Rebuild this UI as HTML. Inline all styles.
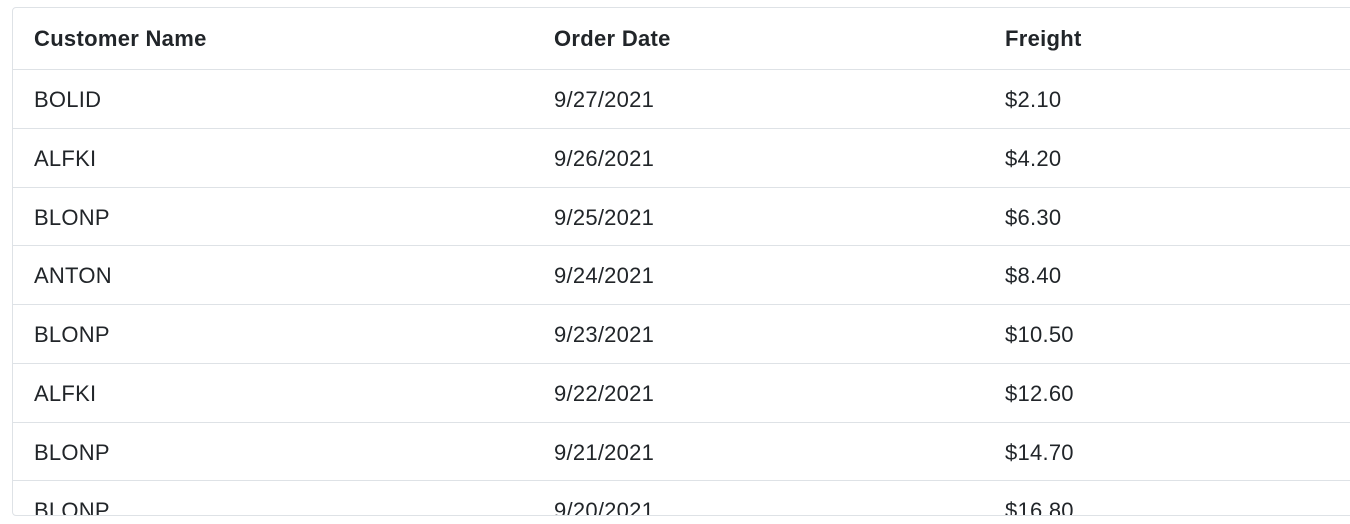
<!DOCTYPE html>
<html><head><style>
body{margin:0;background:#fff;width:1350px;height:524px;overflow:hidden;font-family:"Liberation Sans",Arial,sans-serif;color:#212529}
.box{position:absolute;left:12px;top:7px;width:1360px;height:509px;border:1px solid #dee2e6;border-radius:4px;overflow:hidden;box-sizing:border-box}
.row{position:absolute;left:0;width:100%;border-bottom:1px solid #dee2e6;box-sizing:border-box}
.row span{position:absolute;font-size:22px;line-height:24px;letter-spacing:0.25px}
.h span{font-weight:bold;letter-spacing:0.3px}
</style></head><body>
<div class="box">
<div class="row h" style="top:0;height:62px"><span style="left:21px;top:19px">Customer Name</span><span style="left:541px;top:19px">Order Date</span><span style="left:992px;top:19px">Freight</span></div>
<div class="row" style="top:62px;height:58.5px"><span style="left:21px;top:18px">BOLID</span><span style="left:541px;top:18px">9/27/2021</span><span style="left:992px;top:18px">$2.10</span></div>
<div class="row" style="top:120.5px;height:59px"><span style="left:21px;top:18px">ALFKI</span><span style="left:541px;top:18px">9/26/2021</span><span style="left:992px;top:18px">$4.20</span></div>
<div class="row" style="top:179.5px;height:58.5px"><span style="left:21px;top:18px">BLONP</span><span style="left:541px;top:18px">9/25/2021</span><span style="left:992px;top:18px">$6.30</span></div>
<div class="row" style="top:238px;height:59px"><span style="left:21px;top:18px">ANTON</span><span style="left:541px;top:18px">9/24/2021</span><span style="left:992px;top:18px">$8.40</span></div>
<div class="row" style="top:297px;height:58.5px"><span style="left:21px;top:18px">BLONP</span><span style="left:541px;top:18px">9/23/2021</span><span style="left:992px;top:18px">$10.50</span></div>
<div class="row" style="top:355.5px;height:59px"><span style="left:21px;top:18px">ALFKI</span><span style="left:541px;top:18px">9/22/2021</span><span style="left:992px;top:18px">$12.60</span></div>
<div class="row" style="top:414.5px;height:58.5px"><span style="left:21px;top:18px">BLONP</span><span style="left:541px;top:18px">9/21/2021</span><span style="left:992px;top:18px">$14.70</span></div>
<div class="row" style="top:473px;height:59px;border:none"><span style="left:21px;top:18px">BLONP</span><span style="left:541px;top:18px">9/20/2021</span><span style="left:992px;top:18px">$16.80</span></div>
</div>
</body></html>
